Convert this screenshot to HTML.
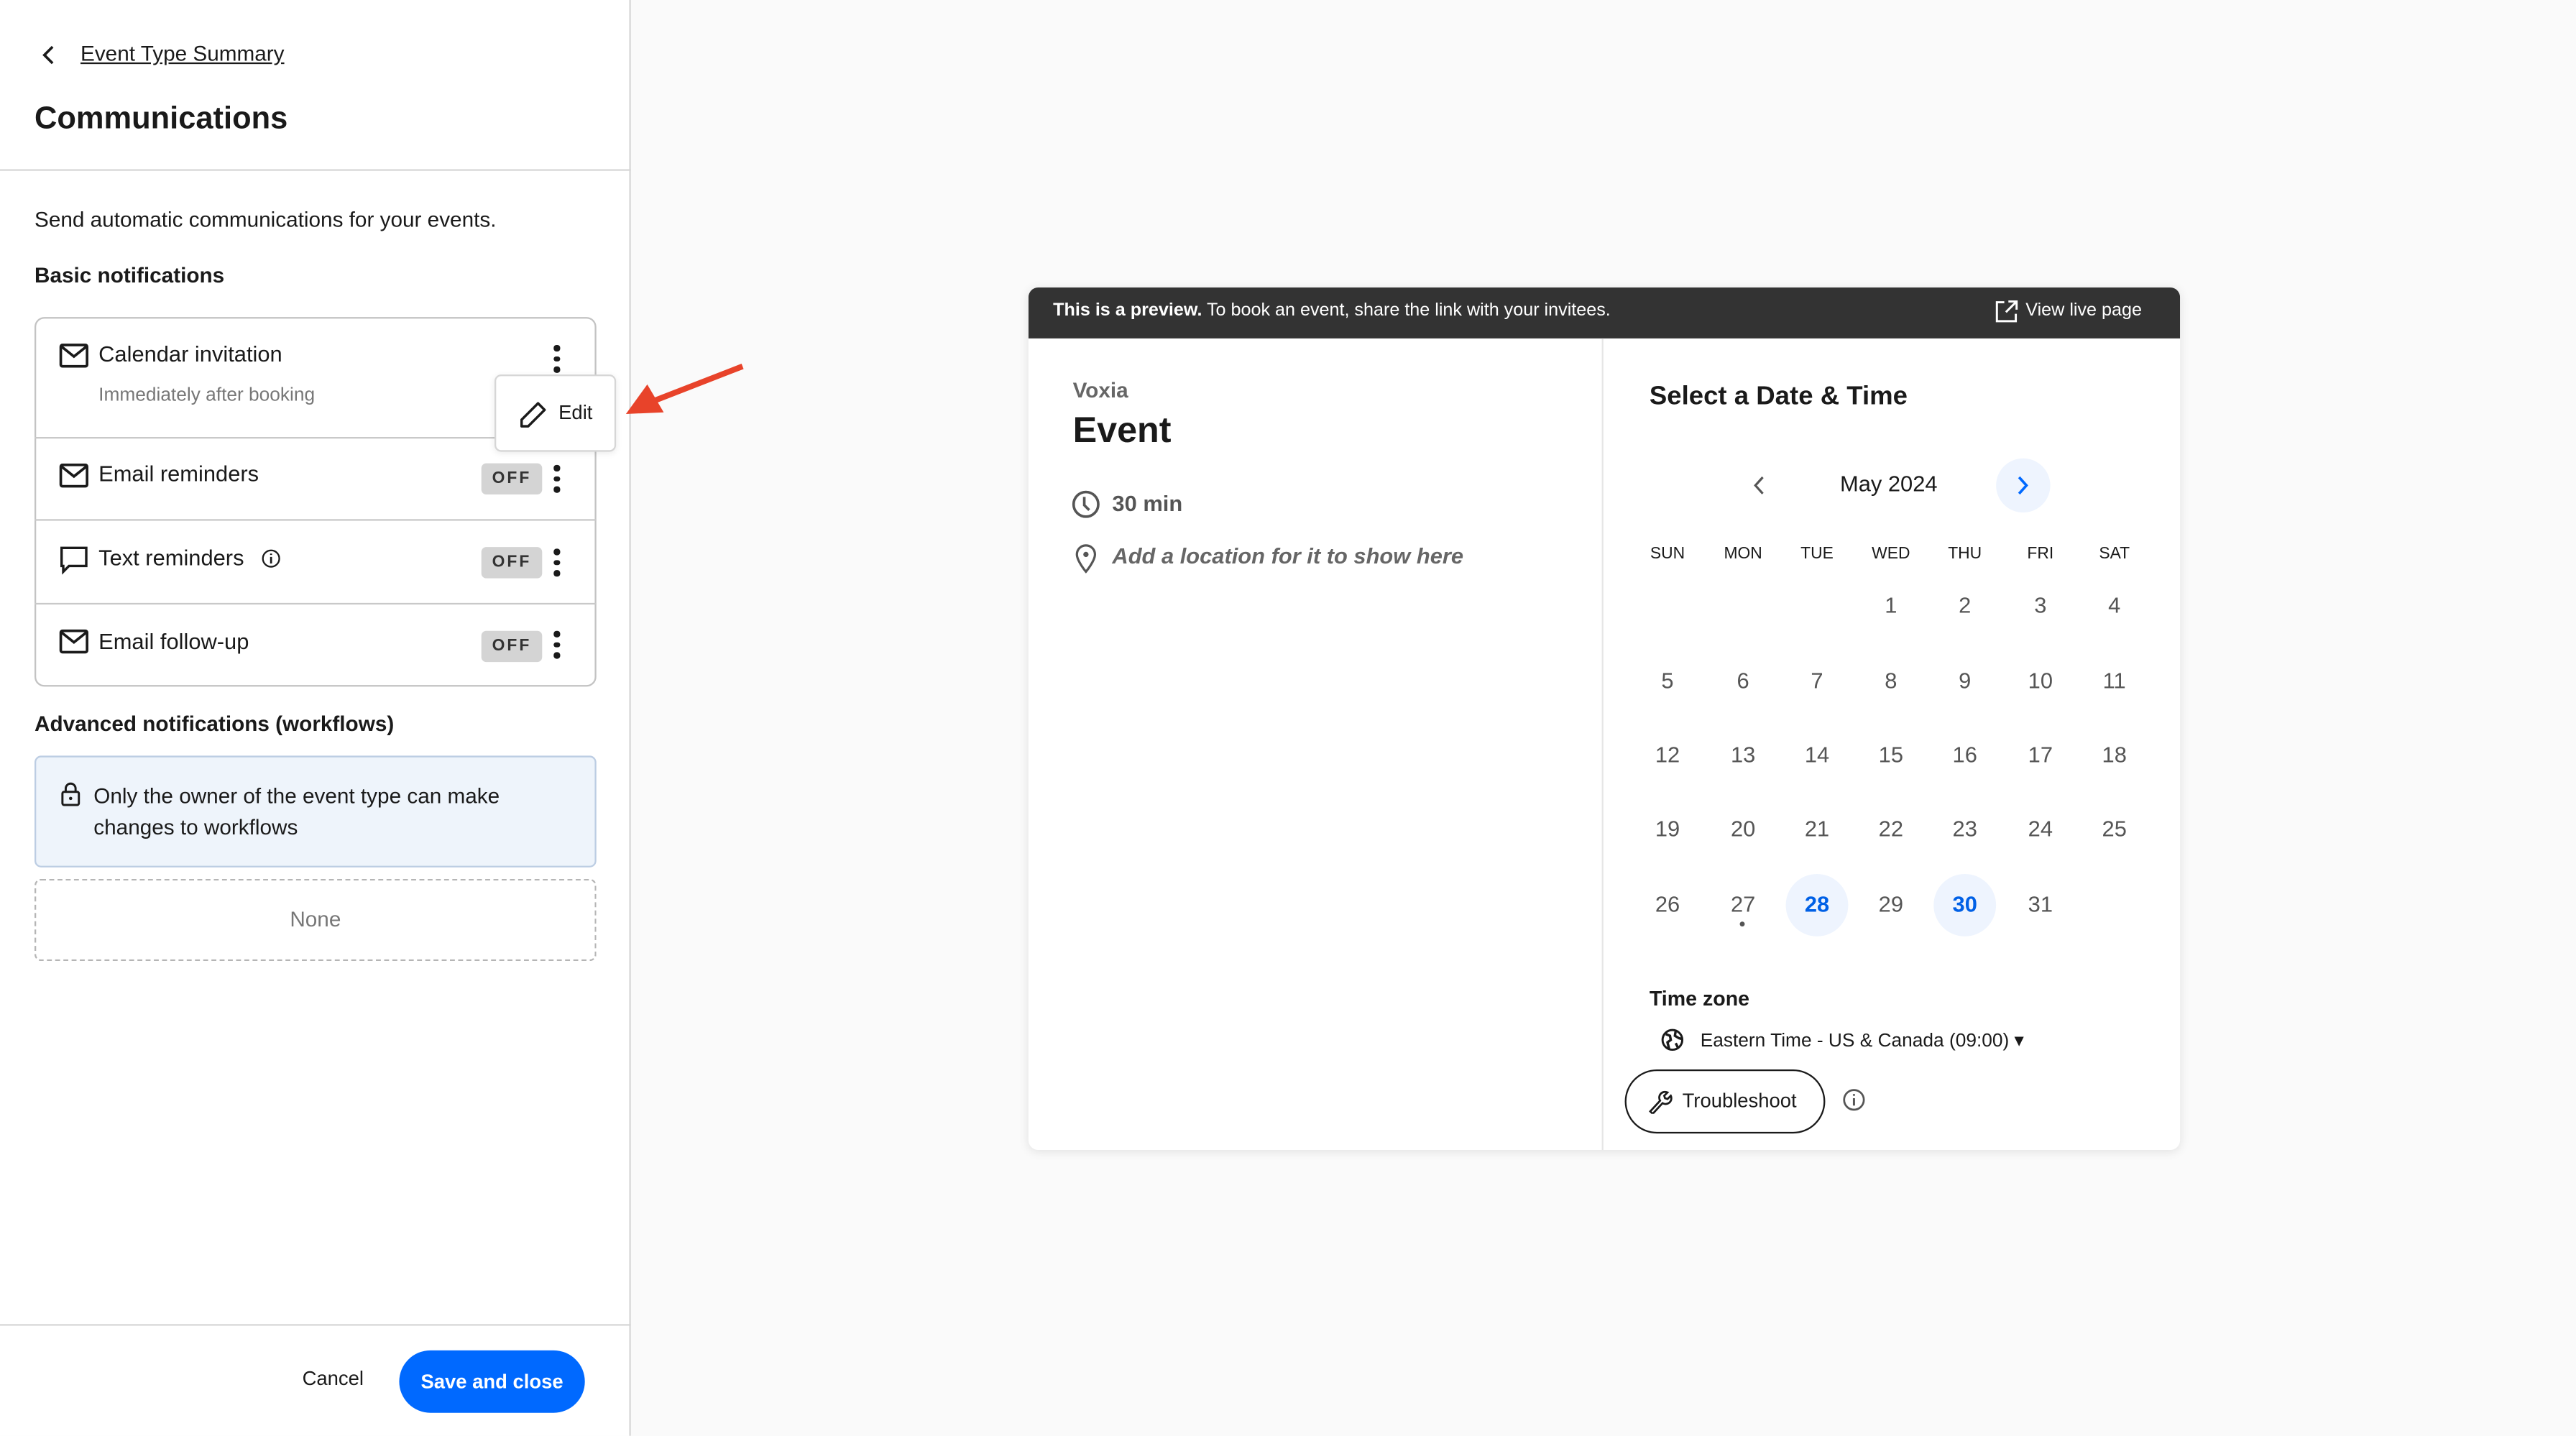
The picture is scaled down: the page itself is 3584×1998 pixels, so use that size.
<!DOCTYPE html>
<html><head><meta charset="utf-8"><style>
*{box-sizing:border-box;margin:0;padding:0}
html,body{width:3584px;height:1998px;overflow:hidden;background:#fafafa}
#w{position:absolute;left:0;top:0;width:1568px;height:874.1px;transform:scale(2.285714);transform-origin:0 0;font-family:"Liberation Sans",sans-serif;color:#1a1a1a}
.a{position:absolute}
.t{white-space:nowrap}
.off{position:absolute;left:293px;width:37px;height:19px;background:#d4d4d4;border-radius:3px;font-size:10px;font-weight:bold;letter-spacing:1.3px;text-align:center;line-height:19px;color:#333}
.dots{position:absolute;left:337px;width:4px}
.dots i{display:block;width:3.5px;height:3.5px;background:#1a1a1a;border-radius:50%;margin-bottom:3px}
.row{position:absolute;left:21px;width:342px;border-top:1px solid #c9c9c9}
.d{position:absolute;width:40px;margin-left:-20px;text-align:center;font-size:13.5px;color:#555}
.h{position:absolute;width:40px;margin-left:-20px;text-align:center;font-size:10px;color:#1a1a1a}
</style></head><body><div id="w">
<div class="a" style="left:0;top:0;width:384px;height:874px;background:#fff;border-right:1px solid #d6d6d6"></div>
<svg class="a" style="left:24px;top:27px" width="12" height="13" viewBox="0 0 12 13"><path d="M8 1.5L3 6.5l5 5" fill="none" stroke="#1a1a1a" stroke-width="1.6"/></svg>
<div class="a t" style="left:49px;top:25px;font-size:13px;text-decoration:underline">Event Type Summary</div>
<div class="a t" style="left:21px;top:62px;font-size:19px;font-weight:bold">Communications</div>
<div class="a" style="left:0;top:103px;width:384px;height:1px;background:#d6d6d6"></div>
<div class="a t" style="left:21px;top:126px;font-size:13px">Send automatic communications for your events.</div>
<div class="a t" style="left:21px;top:160px;font-size:13px;font-weight:bold">Basic notifications</div>
<div class="a" style="left:21px;top:193px;width:342px;height:225px;border:1px solid #c3c3c3;border-radius:6px"></div>
<div class="row" style="top:266px"></div><div class="row" style="top:316px"></div><div class="row" style="top:367px"></div>
<svg class="a" style="left:36px;top:209px" width="18" height="15" viewBox="0 0 18 15"><rect x="1" y="1" width="16" height="13" rx="1" fill="none" stroke="#1a1a1a" stroke-width="1.6"/><path d="M1.5 2l7.5 6 7.5-6" fill="none" stroke="#1a1a1a" stroke-width="1.6"/></svg>
<div class="a t" style="left:60px;top:208px;font-size:13.5px">Calendar invitation</div>
<div class="a t" style="left:60px;top:235px;font-size:11.5px;color:#777">Immediately after booking</div>
<div class="dots" style="top:210px"><i></i><i></i><i></i></div>
<svg class="a" style="left:36px;top:282px" width="18" height="15" viewBox="0 0 18 15"><rect x="1" y="1" width="16" height="13" rx="1" fill="none" stroke="#1a1a1a" stroke-width="1.6"/><path d="M1.5 2l7.5 6 7.5-6" fill="none" stroke="#1a1a1a" stroke-width="1.6"/></svg>
<div class="a t" style="left:60px;top:281px;font-size:13.5px">Email reminders</div>
<div class="off" style="top:282px">OFF</div><div class="dots" style="top:283px"><i></i><i></i><i></i></div>
<svg class="a" style="left:36px;top:332px" width="18" height="18" viewBox="0 0 18 18"><path d="M1.5 1.5h15v11H6l-3.5 3.5v-3.5h-1z" fill="none" stroke="#1a1a1a" stroke-width="1.5"/></svg>
<div class="a t" style="left:60px;top:332px;font-size:13.5px">Text reminders</div>
<svg class="a" style="left:159px;top:334px" width="12" height="12" viewBox="0 0 12 12"><circle cx="6" cy="6" r="5" fill="none" stroke="#1a1a1a" stroke-width="1"/><path d="M6 5v4M6 3v.8" stroke="#1a1a1a" stroke-width="1.2"/></svg>
<div class="off" style="top:333px">OFF</div><div class="dots" style="top:334px"><i></i><i></i><i></i></div>
<svg class="a" style="left:36px;top:383px" width="18" height="15" viewBox="0 0 18 15"><rect x="1" y="1" width="16" height="13" rx="1" fill="none" stroke="#1a1a1a" stroke-width="1.6"/><path d="M1.5 2l7.5 6 7.5-6" fill="none" stroke="#1a1a1a" stroke-width="1.6"/></svg>
<div class="a t" style="left:60px;top:383px;font-size:13.5px">Email follow-up</div>
<div class="off" style="top:384px">OFF</div><div class="dots" style="top:384px"><i></i><i></i><i></i></div>
<div class="a" style="left:301px;top:228px;width:74px;height:47px;background:#fff;border:1px solid #d6d6d6;border-radius:4px;box-shadow:0 1px 4px rgba(0,0,0,.08)"></div>
<svg class="a" style="left:314px;top:243px" width="20" height="20" viewBox="0 0 20 20"><path d="M13.5 2.5l4 4-10 10H3.5v-4z" fill="none" stroke="#1a1a1a" stroke-width="1.5" stroke-linejoin="round"/></svg>
<div class="a t" style="left:340px;top:244px;font-size:12px">Edit</div>
<svg class="a" style="left:378px;top:218px" width="78" height="38" viewBox="0 0 78 38"><path d="M74 5L20 26" stroke="#e8432a" stroke-width="3.5"/><path d="M3 34L16 16 26 33z" fill="#e8432a"/></svg>
<div class="a t" style="left:21px;top:433px;font-size:13px;font-weight:bold">Advanced notifications (workflows)</div>
<div class="a" style="left:21px;top:460px;width:342px;height:68px;background:#eef4fb;border:1px solid #bccde3;border-radius:4px"></div>
<svg class="a" style="left:37px;top:476px" width="12" height="15" viewBox="0 0 12 15"><rect x="1" y="6" width="10" height="8" rx="1" fill="none" stroke="#1a1a1a" stroke-width="1.3"/><path d="M3 6V4a3 3 0 016 0v2" fill="none" stroke="#1a1a1a" stroke-width="1.3"/><circle cx="6" cy="10" r="1" fill="#1a1a1a"/></svg>
<div class="a" style="left:57px;top:475px;font-size:13px;line-height:19px;width:290px">Only the owner of the event type can make changes to workflows</div>
<div class="a" style="left:21px;top:535px;width:342px;height:50px;border:1px dashed #b5b5b5;border-radius:4px;text-align:center;line-height:48px;font-size:13px;color:#777">None</div>
<div class="a" style="left:0;top:806px;width:384px;height:1px;background:#d6d6d6"></div>
<div class="a t" style="left:184px;top:832px;font-size:12px">Cancel</div>
<div class="a t" style="left:243px;top:822px;width:113px;height:38px;border-radius:19px;background:#0069ff;color:#fff;font-size:12px;font-weight:bold;text-align:center;line-height:38px">Save and close</div>

<div class="a" style="left:626px;top:175px;width:701px;height:525px;background:#fff;border-radius:6px;box-shadow:0 1px 6px rgba(0,0,0,.1);overflow:hidden">
<div class="a" style="left:0;top:0;width:701px;height:31px;background:#333"></div>
<div class="a" style="left:349px;top:31px;width:1px;height:494px;background:#e6e6e6"></div>
</div>
<div class="a t" style="left:641px;top:183px;font-size:11px;color:#fff"><b>This is a preview.</b> To book an event, share the link with your invitees.</div>
<svg class="a" style="left:1214px;top:182px" width="15" height="15" viewBox="0 0 15 15"><path d="M6 2H1.5v11.5H13V9M8.5 1.5h5v5M13.5 1.5L7 8" fill="none" stroke="#fff" stroke-width="1.3"/></svg>
<div class="a t" style="left:1233px;top:183px;font-size:11px;color:#fff">View live page</div>
<div class="a t" style="left:653px;top:230px;font-size:13px;font-weight:bold;color:#666">Voxia</div>
<div class="a t" style="left:653px;top:249px;font-size:22px;font-weight:bold">Event</div>
<svg class="a" style="left:652px;top:298px" width="18" height="18" viewBox="0 0 18 18"><circle cx="9" cy="9" r="7.5" fill="none" stroke="#555" stroke-width="1.6"/><path d="M8 4.5v5l3 3" fill="none" stroke="#555" stroke-width="1.6"/></svg>
<div class="a t" style="left:677px;top:299px;font-size:13.5px;font-weight:bold;color:#555">30 min</div>
<svg class="a" style="left:654px;top:331px" width="14" height="18" viewBox="0 0 14 18"><path d="M7 17S1.5 10.5 1.5 6.5a5.5 5.5 0 0111 0C12.5 10.5 7 17 7 17z" fill="none" stroke="#555" stroke-width="1.4"/><circle cx="7" cy="6.5" r="1.6" fill="#555"/></svg>
<div class="a t" style="left:677px;top:331px;font-size:13.5px;font-weight:bold;font-style:italic;color:#666">Add a location for it to show here</div>
<div class="a t" style="left:1004px;top:233px;font-size:16px;font-weight:bold">Select a Date &amp; Time</div>
<svg class="a" style="left:1065px;top:289px" width="12" height="13" viewBox="0 0 12 13"><path d="M8 1.5L3.5 6.5 8 11.5" fill="none" stroke="#555" stroke-width="1.4"/></svg>
<div class="a t" style="left:1120px;top:287px;font-size:13.5px">May 2024</div>
<div class="a" style="left:1215px;top:279px;width:33px;height:33px;border-radius:50%;background:#eef4fe"></div>
<svg class="a" style="left:1225px;top:289px" width="12" height="13" viewBox="0 0 12 13"><path d="M4 1.5l4.5 5L4 11.5" fill="none" stroke="#0069ff" stroke-width="1.6"/></svg>
<div class="h" style="left:1015px;top:332px">SUN</div><div class="h" style="left:1061px;top:332px">MON</div><div class="h" style="left:1106px;top:332px">TUE</div><div class="h" style="left:1151px;top:332px">WED</div><div class="h" style="left:1196px;top:332px">THU</div><div class="h" style="left:1242px;top:332px">FRI</div><div class="h" style="left:1287px;top:332px">SAT</div>
<div class="d" style="left:1151px;top:361px">1</div><div class="d" style="left:1196px;top:361px">2</div><div class="d" style="left:1242px;top:361px">3</div><div class="d" style="left:1287px;top:361px">4</div>
<div class="d" style="left:1015px;top:407px">5</div><div class="d" style="left:1061px;top:407px">6</div><div class="d" style="left:1106px;top:407px">7</div><div class="d" style="left:1151px;top:407px">8</div><div class="d" style="left:1196px;top:407px">9</div><div class="d" style="left:1242px;top:407px">10</div><div class="d" style="left:1287px;top:407px">11</div>
<div class="d" style="left:1015px;top:452px">12</div><div class="d" style="left:1061px;top:452px">13</div><div class="d" style="left:1106px;top:452px">14</div><div class="d" style="left:1151px;top:452px">15</div><div class="d" style="left:1196px;top:452px">16</div><div class="d" style="left:1242px;top:452px">17</div><div class="d" style="left:1287px;top:452px">18</div>
<div class="d" style="left:1015px;top:497px">19</div><div class="d" style="left:1061px;top:497px">20</div><div class="d" style="left:1106px;top:497px">21</div><div class="d" style="left:1151px;top:497px">22</div><div class="d" style="left:1196px;top:497px">23</div><div class="d" style="left:1242px;top:497px">24</div><div class="d" style="left:1287px;top:497px">25</div>
<div class="a" style="left:1087px;top:532px;width:38px;height:38px;border-radius:50%;background:#eef4fe"></div>
<div class="a" style="left:1177px;top:532px;width:38px;height:38px;border-radius:50%;background:#eef4fe"></div>
<div class="d" style="left:1015px;top:543px">26</div><div class="d" style="left:1061px;top:543px">27</div><div class="d" style="left:1106px;top:543px;color:#0060e6;font-weight:bold">28</div><div class="d" style="left:1151px;top:543px">29</div><div class="d" style="left:1196px;top:543px;color:#0060e6;font-weight:bold">30</div><div class="d" style="left:1242px;top:543px">31</div>
<div class="a" style="left:1059px;top:561px;width:3px;height:3px;border-radius:50%;background:#555"></div>
<div class="a t" style="left:1004px;top:601px;font-size:12.5px;font-weight:bold">Time zone</div>
<svg class="a" style="left:1011px;top:626px" width="14" height="14" viewBox="0 0 14 14"><circle cx="7" cy="7" r="6" fill="none" stroke="#1a1a1a" stroke-width="1.3"/><path d="M3 3.5l2.5 1 .5 2.5-2 1.5 1 4M9 1.5l-.5 3 2.5 1.5 2 .5M9 9l1.5 3" fill="none" stroke="#1a1a1a" stroke-width="1.5"/></svg>
<div class="a t" style="left:1035px;top:626px;font-size:11.5px">Eastern Time - US &amp; Canada (09:00) ▾</div>
<div class="a" style="left:989px;top:651px;width:122px;height:39px;border:1px solid #1a1a1a;border-radius:20px"></div>
<svg class="a" style="left:1003px;top:662px" width="15" height="16" viewBox="0 0 15 16"><path d="M1.5 14.5l6-6.5a3.5 3.5 0 014.5-5l-2 2 .5 1.5 1.5.5 2-2a3.5 3.5 0 01-5 4.5l-6 6.5z" fill="none" stroke="#1a1a1a" stroke-width="1.2"/></svg>
<div class="a t" style="left:1024px;top:663px;font-size:12px">Troubleshoot</div>
<svg class="a" style="left:1121px;top:662px" width="15" height="15" viewBox="0 0 15 15"><circle cx="7.5" cy="7.5" r="6" fill="none" stroke="#555" stroke-width="1.2"/><path d="M7.5 6.5v4.5M7.5 4v1" stroke="#555" stroke-width="1.3"/></svg>
</div></body></html>
